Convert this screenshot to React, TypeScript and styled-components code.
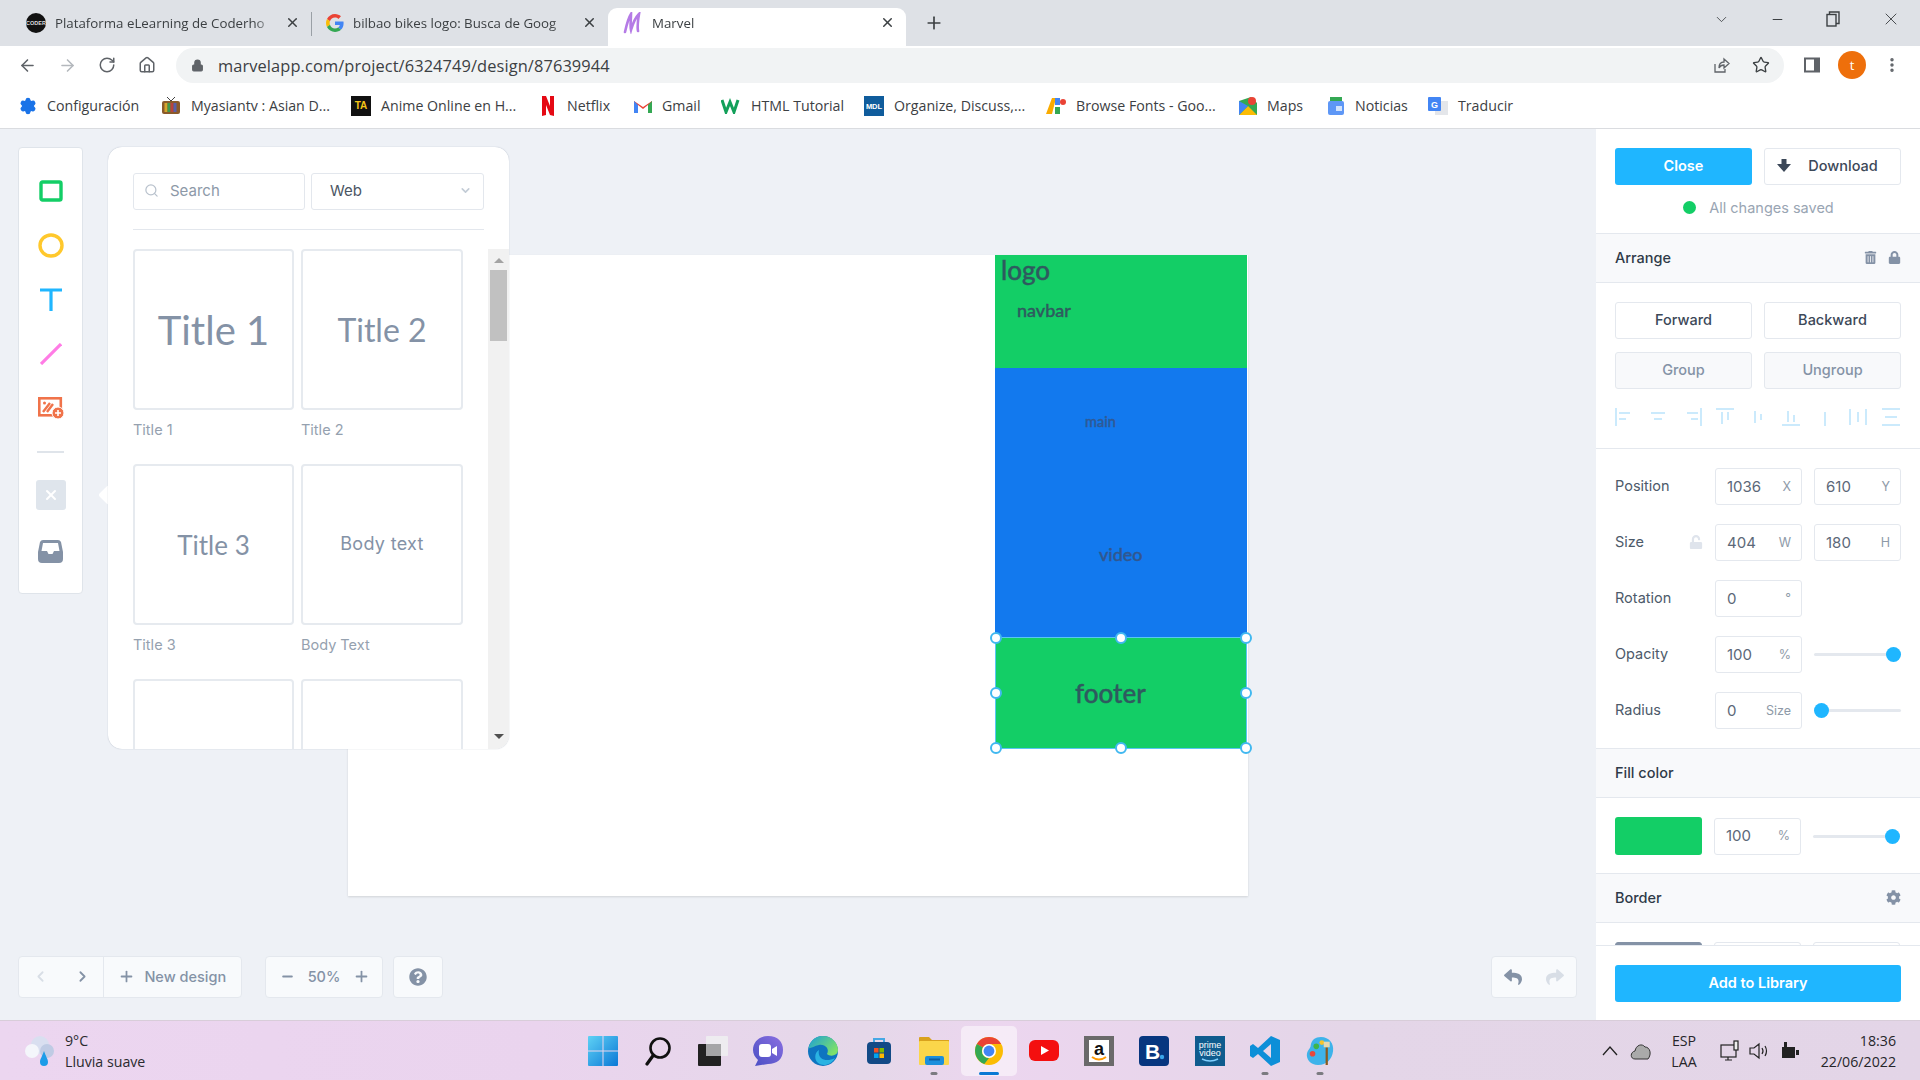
import React from 'react'
import styled, { createGlobalStyle } from 'styled-components'
import {
  ArrowLeft, ArrowRight, RotateCw, Home, Lock, Star, MoreVertical, Plus, X, ChevronDown,
  Minus, Search, ChevronLeft, ChevronRight, Settings,
} from 'lucide-react'
import { FaTrashAlt, FaLock, FaUnlock, FaQuestionCircle, FaReply, FaShare, FaCog } from 'react-icons/fa'

const GlobalStyle = createGlobalStyle`
  html, body { margin: 0; padding: 0; width: 1920px; height: 1080px; overflow: hidden; }
  * { box-sizing: border-box; }
  body { font-family: "Open Sans", "Liberation Sans", sans-serif; background: #eef1f6; }
`

const Page = styled.div`
  width: 1920px;
  height: 1080px;
  display: flex;
  flex-direction: column;
`

/* browser chrome */
const TabStrip = styled.div`
  height: 46px;
  background: #dee1e6;
  display: flex;
  align-items: flex-end;
  padding-left: 14px;
  position: relative;
`
const Tab = styled.div<{ $active?: boolean; $w: number; $pl?: number }>`
  width: ${p => p.$w}px;
  height: 38px;
  padding: 0 11px 9px ${p => p.$pl ?? 12}px;
  display: flex;
  align-items: center;
  gap: 9px;
  font-size: 13.3px;
  color: #3c4043;
  background: ${p => (p.$active ? '#fff' : 'transparent')};
  border-radius: 9px 9px 0 0;
`
const TabTitle = styled.span`
  flex: 1;
  white-space: nowrap;
  -webkit-mask-image: linear-gradient(90deg, #000 90%, transparent);
  mask-image: linear-gradient(90deg, #000 90%, transparent);
`
const TabSep = styled.div`
  width: 1px;
  height: 24px;
  background: #9aa0a6;
  margin-bottom: 10px;
`
const NewTab = styled.div`
  width: 30px;
  height: 38px;
  margin-left: 13px;
  display: flex;
  align-items: center;
  justify-content: center;
  padding-bottom: 8px;
  color: #3c4043;
`
const WindowControls = styled.div`
  margin-left: auto;
  height: 46px;
  display: flex;
  align-items: center;
  color: #3c4043;
`
const WinBtn = styled.div<{ $w: number }>`
  width: ${p => p.$w}px;
  display: flex;
  justify-content: center;
  padding-bottom: 8px;
`
const Toolbar = styled.div`
  height: 38px;
  background: #fff;
  display: flex;
  align-items: center;
  padding: 0 0 0 15px;
  color: #5f6368;
`
const NavIcon = styled.div<{ $off?: boolean; $w?: number }>`
  width: ${p => p.$w ?? 40}px;
  display: flex;
  justify-content: flex-start;
  padding-left: 3px;
  color: ${p => (p.$off ? '#b4b8bd' : '#5f6368')};
`
const Omnibox = styled.div`
  width: 1608px;
  flex: none;
  margin-left: 19px;
  height: 35px;
  background: #f1f3f4;
  border-radius: 18px;
  display: flex;
  align-items: center;
  padding: 0 14px 0 15px;
  gap: 14px;
  font-size: 16.4px;
  color: #202124;
`
const UrlText = styled.span`
  flex: 1;
  color: #3c4043;
  letter-spacing: 0.1px;
`
const ProfileRow = styled.div`
  display: flex;
  align-items: center;
  margin-left: 19px;
  gap: 17px;
`
const Avatar = styled.div`
  width: 28px;
  height: 28px;
  border-radius: 50%;
  background: #ee6f0b;
  color: #fff;
  font-size: 13px;
  display: flex;
  align-items: center;
  justify-content: center;
`
const Bookmarks = styled.div`
  height: 45px;
  background: #fff;
  border-bottom: 1px solid #dadce0;
  display: flex;
  align-items: center;
  padding: 0 0 1px 19px;
  font-size: 14.2px;
  color: #3c4043;
`
const Bookmark = styled.div<{ $w: number }>`
  width: ${p => p.$w}px;
  flex: none;
  display: flex;
  align-items: center;
  gap: 10px;
  white-space: nowrap;
`

/* marvel workspace */
const Workspace = styled.div`
  flex: 1;
  position: relative;
  display: flex;
  background: #eef1f6;
  min-height: 0;
`
const Stage = styled.div`
  flex: 1;
  position: relative;
  overflow: hidden;
`
const Artboard = styled.div`
  position: absolute;
  left: 348px;
  top: 126px;
  width: 900px;
  height: 641px;
  background: #fff;
  box-shadow: 0 1px 2px rgba(0, 0, 0, 0.12);
`
const Shape = styled.div<{ $x: number; $y: number; $w: number; $h: number; $c: string }>`
  position: absolute;
  left: ${p => p.$x}px;
  top: ${p => p.$y}px;
  width: ${p => p.$w}px;
  height: ${p => p.$h}px;
  background: ${p => p.$c};
`
const ShapeText = styled.span<{ $x: number; $y: number; $s: number; $c?: string }>`
  position: absolute;
  left: ${p => p.$x}px;
  top: ${p => p.$y}px;
  font-family: Lato, "Open Sans", sans-serif;
  font-size: ${p => p.$s}px;
  line-height: 1;
  font-weight: 500;
  color: ${p => p.$c ?? '#2f5a5f'};
  -webkit-text-stroke: 0.4px currentColor;
`
const Selection = styled.div`
  position: absolute;
  left: 995px;
  top: 508px;
  width: 252px;
  height: 112px;
  border: 1px solid #58c6f2;
`
const Handle = styled.span<{ $l: string; $t: string }>`
  position: absolute;
  left: ${p => p.$l};
  top: ${p => p.$t};
  width: 12px;
  height: 12px;
  margin: -6px 0 0 -6px;
  background: #fff;
  border: 2px solid #41b8f0;
  border-radius: 50%;
`
const ToolRail = styled.div`
  position: absolute;
  left: 18px;
  top: 18px;
  width: 65px;
  height: 447px;
  background: #fff;
  border: 1px solid #dfe4ea;
  border-radius: 4px;
  display: flex;
  flex-direction: column;
  align-items: center;
  padding-top: 29px;
`
const ToolSlot = styled.div<{ $h: number }>`
  height: ${p => p.$h}px;
  flex: none;
  display: flex;
  align-items: center;
  justify-content: center;
`
const RailLine = styled.div`
  width: 27px;
  height: 2px;
  background: #dfe4ea;
`
const CloseTool = styled.div`
  width: 30px;
  height: 30px;
  border-radius: 3px;
  background: #dfe5ec;
  color: #fff;
  display: flex;
  align-items: center;
  justify-content: center;
`
const Library = styled.div`
  position: absolute;
  left: 108px;
  top: 18px;
  width: 401px;
  height: 602px;
  background: #fff;
  border-radius: 14px;
  box-shadow: 0 0 1px rgba(80, 100, 130, 0.5);
  padding: 26px 25px 0;
  overflow: hidden;
`
const Caret = styled.div`
  position: absolute;
  left: 101px;
  top: 359px;
  width: 14px;
  height: 14px;
  background: #fff;
  transform: rotate(45deg);
  border-radius: 2px;
`
const FilterRow = styled.div`
  display: flex;
  gap: 6px;
  width: 351px;
`
const SearchBox = styled.div`
  width: 172px;
  height: 37px;
  border: 1px solid #e3e7ed;
  border-radius: 3px;
  display: flex;
  align-items: center;
  gap: 11px;
  padding: 0 0 2px 10px;
  font: 15px Inter, sans-serif;
  color: #8d99a8;
`
const SelectBox = styled.div`
  width: 173px;
  height: 37px;
  border: 1px solid #e3e7ed;
  border-radius: 3px;
  display: flex;
  align-items: center;
  justify-content: space-between;
  padding: 0 11px 2px 18px;
  font: 15px Inter, sans-serif;
  color: #4b5563;
`
const LibRule = styled.div`
  width: 351px;
  height: 1px;
  background: #e3e7ed;
  margin: 19px 0 19px;
`
const CardGrid = styled.div`
  display: grid;
  grid-template-columns: 161px 162px;
  column-gap: 7px;
  grid-auto-rows: 215px;
`
const CardItem = styled.div`
  display: flex;
  flex-direction: column;
`
const CardFace = styled.div<{ $size?: number; $body?: boolean }>`
  height: 161px;
  flex: none;
  border: 2px solid #e6eaef;
  border-radius: 4px;
  display: flex;
  align-items: center;
  justify-content: center;
  font-family: ${p => (p.$body ? 'Inter' : 'Lato')}, sans-serif;
  font-size: ${p => p.$size ?? 16}px;
  ${p => p.$body && 'letter-spacing: 0.3px; padding-bottom: 3px;'}
  color: #8492a6;
`
const CardLabel = styled.div`
  margin-top: 11px;
  font: 14.5px Inter, sans-serif;
  color: #95a1af;
`
const ScrollTrack = styled.div`
  position: absolute;
  right: 0;
  top: 102px;
  bottom: 0;
  width: 21px;
  background: #f1f1f1;
  display: flex;
  flex-direction: column;
  align-items: center;
`
const ScrollArrow = styled.div<{ $down?: boolean }>`
  width: 0;
  height: 0;
  border-left: 5px solid transparent;
  border-right: 5px solid transparent;
  ${p => (p.$down ? 'border-top: 5px solid #505050;' : 'border-bottom: 5px solid #a3a3a3;')}
  margin-top: ${p => (p.$down ? 'auto' : '9px')};
  margin-bottom: ${p => (p.$down ? '10px' : '0')};
`
const ScrollThumb = styled.div`
  width: 17px;
  height: 71px;
  background: #c1c1c1;
  margin-top: 7px;
`
const FloatGroup = styled.div<{ $x: number; $w: number }>`
  position: absolute;
  left: ${p => p.$x}px;
  top: 827px;
  width: ${p => p.$w}px;
  height: 42px;
  background: #f8fafc;
  border: 1px solid #e4e8ee;
  border-radius: 4px;
  display: flex;
  align-items: center;
  color: #8492a6;
  font: 500 14.5px Inter, sans-serif;
`
const NavCell = styled.div<{ $w: number; $line?: boolean; $off?: boolean }>`
  width: ${p => p.$w}px;
  height: 100%;
  display: flex;
  align-items: center;
  justify-content: center;
  gap: 9px;
  padding-bottom: 1px;
  ${p => p.$line && 'border-right: 1px solid #e4e8ee;'}
  color: ${p => (p.$off ? '#d8dee6' : '#8492a6')};
`

/* right inspector */
const Inspector = styled.aside`
  width: 324px;
  flex: none;
  background: #fff;
  display: flex;
  flex-direction: column;
  font-family: Inter, sans-serif;
`
const InspectorScroll = styled.div`
  flex: 1;
  min-height: 0;
  overflow: hidden;
`
const ActionRow = styled.div<{ $mt?: number }>`
  display: flex;
  gap: 12px;
  padding: 0 19px;
  margin-top: ${p => p.$mt ?? 0}px;
`
const Btn = styled.div<{ $kind?: 'primary' | 'ghost' | 'muted' }>`
  width: 137px;
  height: 37px;
  flex: none;
  border-radius: 3px;
  display: flex;
  align-items: center;
  justify-content: center;
  padding-bottom: 2px;
  font-size: 14.5px;
  font-weight: 500;
  ${p =>
    p.$kind === 'primary'
      ? 'background: #1fb6ff; color: #fff; font-weight: 600;'
      : p.$kind === 'muted'
        ? 'background: #f8f9fb; color: #8492a6; border: 1px solid #e4e8ee;'
        : 'background: #fff; color: #3c4858; border: 1px solid #e4e8ee;'}
`
const DownloadBtn = styled(Btn)`
  gap: 17px;
  padding-right: 10px;
`
const SavedRow = styled.div`
  height: 48px;
  display: flex;
  align-items: center;
  justify-content: center;
  gap: 13px;
  padding: 0 0 4px 1px;
  font-size: 14.5px;
  color: #99a5b3;
`
const GreenDot = styled.span`
  width: 13px;
  height: 13px;
  border-radius: 50%;
  background: #13ce66;
`
const SectionHead = styled.div`
  height: 50px;
  background: #f8f9fb;
  border-top: 1px solid #e4e8ee;
  border-bottom: 1px solid #e4e8ee;
  display: flex;
  align-items: center;
  padding: 0 19px 2px;
  font-size: 14.5px;
  font-weight: 500;
  color: #2f3a48;
`
const HeadIcons = styled.div`
  margin-left: auto;
  display: flex;
  gap: 11px;
  color: #8492a6;
  align-items: center;
`
const AlignRow = styled.div`
  display: flex;
  justify-content: space-between;
  align-items: flex-start;
  padding: 19px 19px 0 19px;
  height: 60px;
  border-bottom: 1px solid #e4e8ee;
`
const AlignGlyph = styled.svg`
  width: 20px;
  height: 18px;
  flex: none;
`
const PropRows = styled.div`
  padding: 19px;
  display: flex;
  flex-direction: column;
  gap: 19px;
`
const PropRow = styled.div`
  height: 37px;
  display: grid;
  grid-template-columns: 88px 87px 87px;
  column-gap: 12px;
  align-items: center;
  font-size: 14.5px;
  color: #4d5a6a;
`
const PropLabel = styled.div`
  display: flex;
  align-items: center;
  justify-content: space-between;
  padding-bottom: 2px;
`
const Field = styled.div`
  height: 37px;
  border: 1px solid #e4e8ee;
  border-radius: 3px;
  display: flex;
  align-items: center;
  justify-content: space-between;
  padding: 0 10px 1px 11px;
  font-size: 15px;
  color: #5c6878;
`
const FieldUnit = styled.span`
  font-size: 12.5px;
  color: #8e9aa8;
`
const Slider = styled.div`
  height: 3px;
  background: #e4e8ee;
  position: relative;
  border-radius: 2px;
`
const Thumb = styled.span<{ $end?: boolean }>`
  position: absolute;
  top: -6px;
  ${p => (p.$end ? 'right: 0;' : 'left: 0;')}
  width: 15px;
  height: 15px;
  border-radius: 50%;
  background: #1fb6ff;
`
const FillRow = styled(PropRow)`
  grid-template-columns: 87px 87px 87px;
  margin: 19px 19px 18px;
  height: 38px;
`
const Swatch = styled.div`
  height: 38px;
  border-radius: 3px;
  background: #13ce66;
`
const ClippedFields = styled.div`
  display: grid;
  grid-template-columns: 87px 87px 87px;
  column-gap: 12px;
  margin: 19px 19px 0;
`
const ClippedField = styled.div<{ $dark?: boolean }>`
  height: 40px;
  border: 1px solid ${p => (p.$dark ? '#8492a6' : '#e4e8ee')};
  background: ${p => (p.$dark ? '#8492a6' : '#fff')};
  border-radius: 3px;
`
const InspectorFoot = styled.div`
  height: 75px;
  flex: none;
  border-top: 1px solid #e4e8ee;
  padding: 19px 19px 0;
`
const LibraryBtn = styled(Btn)`
  width: 286px;
`

/* windows taskbar */
const Taskbar = styled.div`
  height: 60px;
  flex: none;
  background: linear-gradient(90deg, #ecd6f0 0%, #ead4ee 28%, #e5d8e9 45%, #ecd6ef 52%, #e4d6e8 70%, #e3d5e7 100%);
  border-top: 1px solid #d8cdd9;
  position: relative;
  display: flex;
  align-items: center;
`
const Weather = styled.div`
  width: 575px;
  flex: none;
  display: flex;
  align-items: center;
  gap: 9px;
  padding-left: 24px;
  font-size: 14.2px;
  line-height: 21px;
  color: #2a2a2e;
`
const DockRow = styled.div`
  display: flex;
  align-items: center;
`
const DockCell = styled.div<{ $active?: boolean }>`
  width: 55.2px;
  height: 50px;
  display: flex;
  align-items: center;
  justify-content: center;
  position: relative;
  border-radius: 5px;
  ${p => p.$active && 'background: rgba(255,255,255,0.5);'}
`
const DockMark = styled.span<{ $active?: boolean }>`
  position: absolute;
  bottom: 1px;
  left: 50%;
  transform: translateX(-50%);
  height: 3px;
  border-radius: 2px;
  width: ${p => (p.$active ? 20 : 7)}px;
  background: ${p => (p.$active ? '#0a78d4' : '#7b7b80')};
`
const Tray = styled.div`
  margin-left: auto;
  display: flex;
  align-items: center;
  padding-right: 24px;
  color: #26262a;
  font-size: 14.2px;
  line-height: 21px;
`
const TrayText = styled.div<{ $right?: boolean; $w: number }>`
  width: ${p => p.$w}px;
  text-align: ${p => (p.$right ? 'right' : 'center')};
`
const TrayIcons = styled.div`
  display: flex;
  align-items: center;
  gap: 9px;
  margin: 0 16px 0 22px;
`
const TrayGlyph = styled.svg<{ $mr: number }>`
  margin-right: ${p => p.$mr}px;
  flex: none;
`

const DockIcons: { key: string; node: React.ReactNode; dot?: boolean; active?: boolean }[] = [
  {
    key: 'win',
    node: (
      <svg width="30" height="30" viewBox="0 0 30 30">
        <defs>
          <linearGradient id="winG" x1="0" y1="0" x2="1" y2="1">
            <stop offset="0" stopColor="#5fd2f5" />
            <stop offset="1" stopColor="#0b78d6" />
          </linearGradient>
        </defs>
        <path d="M0 1 Q0 0 1 0 H14.5 V14.5 H0Z M15.5 0 H29 Q30 0 30 1 V14.5 H15.5Z M0 15.5 H14.5 V30 H1 Q0 30 0 29Z M15.5 15.5 H30 V29 Q30 30 29 30 H15.5Z" fill="url(#winG)" />
      </svg>
    ),
  },
  {
    key: 'search',
    node: (
      <svg width="28" height="30" viewBox="0 0 28 30" fill="none">
        <circle cx="16" cy="12" r="9.5" stroke="#111" strokeWidth="2.6" />
        <path d="M9.5 19 L3 28" stroke="#111" strokeWidth="3.2" strokeLinecap="round" />
      </svg>
    ),
  },
  {
    key: 'tasks',
    node: (
      <svg width="30" height="30" viewBox="0 0 30 30">
        <rect x="8" y="0" width="22" height="20" rx="1" fill="#eeecf0" />
        <rect x="0" y="8" width="23" height="22" rx="1" fill="#222" />
        <rect x="8" y="8" width="15" height="12" fill="#a5a5a7" />
      </svg>
    ),
  },
  {
    key: 'chat',
    node: (
      <svg width="30" height="30" viewBox="0 0 30 30">
        <defs>
          <linearGradient id="chatG" x1="0" y1="1" x2="1" y2="0">
            <stop offset="0" stopColor="#4a4fc4" />
            <stop offset="1" stopColor="#8a6fe0" />
          </linearGradient>
        </defs>
        <path d="M15 0 C25 0 30 6 30 14 C30 23 24 28 15 28 L2 30 L5 24 C2 21 0 18 0 14 C0 6 6 0 15 0Z" fill="url(#chatG)" />
        <rect x="6" y="8" width="12" height="13" rx="3" fill="#fff" />
        <path d="M19 13 L24 10 V20 L19 17Z" fill="#fff" />
      </svg>
    ),
  },
  {
    key: 'edge',
    node: (
      <svg width="30" height="30" viewBox="0 0 30 30">
        <defs>
          <linearGradient id="edgeG" x1="0" y1="0" x2="1" y2="0.6">
            <stop offset="0" stopColor="#1a9fd8" />
            <stop offset="1" stopColor="#7de06a" />
          </linearGradient>
        </defs>
        <circle cx="15" cy="15" r="15" fill="#0e74c0" />
        <path d="M0.5 12 C3 2 10 0 15 0 C24 0 30 7 30 14 C30 20 22 21 19 18 C22 13 17 8 11 9 C6 10 2 13 0.5 12Z" fill="url(#edgeG)" />
        <path d="M11 14 C9 22 17 27 27 22 C23 30 13 31 9 26 C6 22 7 16 11 14Z" fill="#2ab3e2" />
      </svg>
    ),
  },
  {
    key: 'store',
    node: (
      <svg width="24" height="28" viewBox="0 0 24 28">
        <path d="M7 6 V2 H17 V6" fill="none" stroke="#46a8e4" strokeWidth="2" />
        <rect x="0" y="5" width="24" height="22" rx="4" fill="#124a86" />
        <rect x="7" y="11" width="4.5" height="4.5" fill="#f25022" />
        <rect x="12.5" y="11" width="4.5" height="4.5" fill="#7fba00" />
        <rect x="7" y="16.5" width="4.5" height="4.5" fill="#00a4ef" />
        <rect x="12.5" y="16.5" width="4.5" height="4.5" fill="#ffb900" />
      </svg>
    ),
  },
  {
    key: 'files',
    dot: true,
    node: (
      <svg width="30" height="28" viewBox="0 0 30 28">
        <path d="M0 1 Q0 0 1 0 H10 L13 3 H30 V10 H0Z" fill="#d9a21d" />
        <rect x="0" y="4" width="30" height="24" rx="1" fill="#fbd64a" />
        <rect x="6" y="19" width="19" height="9" rx="2" fill="#1c8fdc" />
        <rect x="10" y="21.5" width="11" height="2" fill="#0e5ea0" />
      </svg>
    ),
  },
  {
    key: 'chrome',
    active: true,
    node: (
      <svg width="28" height="28" viewBox="0 0 30 30">
        <circle cx="15" cy="15" r="15" fill="#fbbc04" />
        <path d="M15 0 A15 15 0 0 1 28 7.5 H15 A7.5 7.5 0 0 0 8.5 11.2 L2 7.5 A15 15 0 0 1 15 0Z" fill="#ea4335" />
        <path d="M2 7.5 L8.5 11.2 A7.5 7.5 0 0 0 15 22.5 L10 29 A15 15 0 0 1 2 7.5Z" fill="#34a853" />
        <circle cx="15" cy="15" r="7.5" fill="#fff" />
        <circle cx="15" cy="15" r="5.8" fill="#4285f4" />
      </svg>
    ),
  },
  {
    key: 'youtube',
    node: (
      <svg width="30" height="30" viewBox="0 0 30 30">
        <rect x="0" y="4" width="30" height="21" rx="6" fill="#f40f0f" />
        <path d="M12 10 L20 14.5 L12 19Z" fill="#fff" />
      </svg>
    ),
  },
  {
    key: 'amazon',
    node: (
      <svg width="30" height="30" viewBox="0 0 30 30">
        <rect width="30" height="30" fill="#6a6a6a" />
        <rect x="5" y="4" width="20" height="22" fill="#fff" />
        <text x="15" y="19" textAnchor="middle" fontSize="18" fontWeight="700" fontFamily="Liberation Sans" fill="#111">a</text>
        <path d="M8 21 Q15 26 22 21" fill="none" stroke="#f90" strokeWidth="2" />
      </svg>
    ),
  },
  {
    key: 'booking',
    node: (
      <svg width="30" height="30" viewBox="0 0 30 30">
        <rect width="30" height="30" rx="4" fill="#07367f" />
        <text x="6" y="23" fontSize="21" fontWeight="700" fontFamily="Liberation Sans" fill="#fff">B</text>
        <circle cx="23" cy="21" r="2.2" fill="#3aa6ea" />
      </svg>
    ),
  },
  {
    key: 'prime',
    node: (
      <svg width="30" height="30" viewBox="0 0 30 30">
        <rect width="30" height="30" fill="#0f5c8e" />
        <text x="15" y="12" textAnchor="middle" fontSize="9" fontFamily="Liberation Sans" fill="#fff">prime</text>
        <text x="15" y="20" textAnchor="middle" fontSize="9" fontFamily="Liberation Sans" fill="#fff">video</text>
        <path d="M7 23 Q15 27 23 23" fill="none" stroke="#7fd0ff" strokeWidth="1.4" />
      </svg>
    ),
  },
  {
    key: 'vscode',
    dot: true,
    node: (
      <svg width="30" height="30" viewBox="0 0 30 30">
        <path d="M21 0 L30 4 V26 L21 30 L8 18 L3 22 L0 20 V10 L3 8 L8 12Z M21 8 L13 15 L21 22Z" fill="#0d8fd8" fillRule="evenodd" />
      </svg>
    ),
  },
  {
    key: 'paint',
    dot: true,
    node: (
      <svg width="28" height="30" viewBox="0 0 30 30">
        <path d="M16 0 C25 0 30 7 29 15 C28 24 22 30 13 30 C5 30 0 24 1 18 C2 13 5 12 5 9 C6 3 10 0 16 0Z" fill="#3eb3ea" />
        <circle cx="7" cy="18" r="3" fill="#e8483a" />
        <circle cx="11" cy="10" r="3" fill="#3fb54a" />
        <circle cx="17" cy="6" r="2.6" fill="#f3c42c" />
        <rect x="21" y="11" width="2.4" height="19" fill="#8a5a1e" />
        <rect x="19" y="5" width="6.4" height="6" fill="#e4d8b0" />
      </svg>
    ),
  },
]

const AlignIcon = ({ d }: { d: string }) => (
  <AlignGlyph viewBox="0 0 20 18" fill="none" stroke="#cbeafc" strokeWidth="2">
    <path d={d} />
  </AlignGlyph>
)

const Favicon = ({ c, t, fg = '#fff', size = 7 }: { c: string; t: string; fg?: string; size?: number }) => (
  <svg width="20" height="20" viewBox="0 0 20 20">
    <rect width="20" height="20" fill={c} />
    <text x="10" y="13" textAnchor="middle" fontSize={size} fontWeight="700" fontFamily="Liberation Sans" fill={fg}>{t}</text>
  </svg>
)

const GoogleG = () => (
  <svg width="18" height="18" viewBox="0 0 48 48">
    <path fill="#EA4335" d="M24 9.5c3.5 0 6.7 1.3 9.1 3.5l6.8-6.8C35.8 2.4 30.2 0 24 0 14.6 0 6.5 5.4 2.6 13.2l7.9 6.2C12.4 13.6 17.7 9.5 24 9.5z" />
    <path fill="#4285F4" d="M46.9 24.5c0-1.6-.1-3.1-.4-4.5H24v9h12.9c-.6 3-2.2 5.5-4.7 7.2l7.7 6c4.5-4.2 7-10.3 7-17.7z" />
    <path fill="#FBBC05" d="M10.5 28.6c-.5-1.4-.8-3-.8-4.6s.3-3.2.8-4.6l-7.9-6.2C.9 16.5 0 20.1 0 24s.9 7.5 2.6 10.8l7.9-6.2z" />
    <path fill="#34A853" d="M24 48c6.5 0 11.9-2.1 15.9-5.8l-7.7-6c-2.2 1.4-4.9 2.3-8.2 2.3-6.3 0-11.6-4.2-13.5-9.9l-7.9 6.2C6.5 42.6 14.6 48 24 48z" />
  </svg>
)

const MarvelMark = () => (
  <svg width="20" height="22" viewBox="0 0 20 22" fill="none" stroke="#b57be6" strokeWidth="2.6" strokeLinecap="round">
    <path d="M2 20 C4 11 6 5 8 2 C8 8 7 14 8 18 C10 11 13 5 16 2 C15 8 14 14 15 19" />
  </svg>
)

const handles: [string, string][] = [
  ['0', '0'], ['50%', '0'], ['100%', '0'], ['0', '50%'], ['100%', '50%'], ['0', '100%'], ['50%', '100%'], ['100%', '100%'],
]

export default function App() {
  return (
    <Page>
      <GlobalStyle />
      <TabStrip>
        <Tab $w={297}>
          <svg width="20" height="20" viewBox="0 0 20 20">
            <circle cx="10" cy="10" r="10" fill="#111" />
            <text x="10" y="12" textAnchor="middle" fontSize="5.5" fontWeight="700" fontFamily="Liberation Sans" fill="#ddd">CODER</text>
          </svg>
          <TabTitle>Plataforma eLearning de Coderho</TabTitle>
          <X size={15} strokeWidth={2.4} />
        </Tab>
        <TabSep />
        <Tab $w={296} $pl={14}>
          <GoogleG />
          <TabTitle>bilbao bikes logo: Busca de Goog</TabTitle>
          <X size={15} strokeWidth={2.4} />
        </Tab>
        <Tab $active $w={298} $pl={15}>
          <MarvelMark />
          <TabTitle>Marvel</TabTitle>
          <X size={15} strokeWidth={2.4} />
        </Tab>
        <NewTab><Plus size={20} strokeWidth={2} /></NewTab>
        <WindowControls>
          <WinBtn $w={58}><ChevronDown size={17} strokeWidth={1.2} /></WinBtn>
          <WinBtn $w={54}><Minus size={15} strokeWidth={1.6} /></WinBtn>
          <WinBtn $w={58}>
            <svg width="14" height="16" viewBox="0 0 14 16" fill="none" stroke="#3c4043" strokeWidth="1.4"><rect x="1" y="3.5" width="9" height="11.5" /><path d="M3.5 3.5 V1 H13 V12.5 H10" /></svg>
          </WinBtn>
          <WinBtn $w={58}><X size={20} strokeWidth={1.1} /></WinBtn>
        </WindowControls>
      </TabStrip>

      <Toolbar>
        <NavIcon><ArrowLeft size={19} /></NavIcon>
        <NavIcon $off><ArrowRight size={19} /></NavIcon>
        <NavIcon><RotateCw size={18} /></NavIcon>
        <NavIcon $w={22}><Home size={18} /></NavIcon>
        <Omnibox>
          <Lock size={13} fill="#5f6368" color="#5f6368" />
          <UrlText>marvelapp.com/project/6324749/design/87639944</UrlText>
          <svg width="18" height="18" viewBox="0 0 18 18" fill="none" stroke="#5f6368" strokeWidth="1.3">
            <path d="M3 8 V16 H13 V13" />
            <path d="M7 12 C7 8 9 6 12 6 V3 L17 7.5 L12 12 V9 C10 9 8 10 7 12Z" />
          </svg>
          <Star size={18} color="#3c4043" strokeWidth={1.8} style={{ marginLeft: 8 }} />
        </Omnibox>
        <ProfileRow>
          <svg width="18" height="18" viewBox="0 0 18 18"><rect x="1" y="1.5" width="16" height="15" fill="#5f6368" /><rect x="3" y="3.5" width="8" height="11" fill="#fff" /></svg>
          <Avatar>t</Avatar>
          <MoreVertical size={18} color="#5f6368" strokeWidth={2.6} />
        </ProfileRow>
      </Toolbar>

      <Bookmarks>
        <Bookmark $w={142}><Settings size={18} fill="#1a73e8" color="#1a73e8" />Configuración</Bookmark>
        <Bookmark $w={190}>
          <svg width="20" height="20" viewBox="0 0 20 20">
            <path d="M6 1 L10 5 L14 1" stroke="#444" fill="none" />
            <rect x="1" y="5" width="18" height="13" rx="2" fill="#8a5a2a" />
            <rect x="3.5" y="7" width="3" height="9" fill="#d6a52c" />
            <rect x="6.5" y="7" width="3" height="9" fill="#3f9a4d" />
            <rect x="9.5" y="7" width="3" height="9" fill="#b8433d" />
            <rect x="12.5" y="7" width="3" height="9" fill="#5a5fa8" />
          </svg>
          Myasiantv : Asian D...
        </Bookmark>
        <Bookmark $w={188}><Favicon c="#111" t="TA" fg="#f5c518" size={10} />Anime Online en H...</Bookmark>
        <Bookmark $w={95}>
          <svg width="18" height="20" viewBox="0 0 18 20"><path d="M3 0 H7 L11 10 V0 H15 V20 L11 19 L7 9 V19 L3 20Z" fill="#e50914" /></svg>
          Netflix
        </Bookmark>
        <Bookmark $w={87}>
          <svg width="18" height="14" viewBox="0 0 18 14"><path d="M0 2 L9 8 L18 2 V14 H14 V6 L9 10 L4 6 V14 H0Z" fill="#ea4335" /><path d="M0 2 V14 H4 V6Z" fill="#4285f4" /><path d="M18 2 V14 H14 V6Z" fill="#34a853" /></svg>
          Gmail
        </Bookmark>
        <Bookmark $w={143}>
          <svg width="20" height="16" viewBox="0 0 20 16" fill="none" stroke="#13a05a" strokeWidth="3"><path d="M1 2 L5 14 L9 4 L13 14 L17 2" /></svg>
          HTML Tutorial
        </Bookmark>
        <Bookmark $w={182}><Favicon c="#0f5c9c" t="MDL" size={7.5} />Organize, Discuss,...</Bookmark>
        <Bookmark $w={193}>
          <svg width="20" height="16" viewBox="0 0 20 16"><path d="M0 16 L6 0 H10 L6 16Z" fill="#f9ab00" /><rect x="9" y="0" width="5" height="7" fill="#4285f4" /><rect x="9" y="9" width="5" height="7" fill="#34a853" /><circle cx="17" cy="4" r="3" fill="#ea4335" /></svg>
          Browse Fonts - Goo...
        </Bookmark>
        <Bookmark $w={88}>
          <svg width="18" height="18" viewBox="0 0 18 18"><path d="M0 4 L12 0 L18 6 V18 H0Z" fill="#34a853" /><path d="M0 18 L9 9 L18 18Z" fill="#fbbc04" /><path d="M0 4 L9 9 L0 18Z" fill="#4285f4" /><circle cx="13" cy="4" r="4" fill="#ea4335" /></svg>
          Maps
        </Bookmark>
        <Bookmark $w={101}>
          <svg width="18" height="18" viewBox="0 0 18 18"><rect x="3" y="0" width="12" height="6" fill="#34a853" /><rect x="1" y="4" width="16" height="14" rx="2" fill="#5e97f6" /><rect x="9" y="9" width="6" height="5" fill="#d2e3fc" /></svg>
          Noticias
        </Bookmark>
        <Bookmark $w={100}>
          <svg width="20" height="20" viewBox="0 0 20 20"><rect x="7" y="5" width="13" height="14" fill="#e4e6ea" /><rect x="0" y="1" width="13" height="14" rx="1" fill="#4285f4" /><text x="6.5" y="11.5" textAnchor="middle" fontSize="9" fontWeight="700" fontFamily="Liberation Sans" fill="#fff">G</text></svg>
          Traducir
        </Bookmark>
      </Bookmarks>

      <Workspace>
        <Stage>
          <Artboard />
          <Shape $x={995} $y={126} $w={252} $h={113} $c="#13ce66">
            <ShapeText $x={6} $y={2} $s={26}>logo</ShapeText>
            <ShapeText $x={22} $y={46} $s={18}>navbar</ShapeText>
          </Shape>
          <Shape $x={995} $y={239} $w={252} $h={269} $c="#1279ee">
            <ShapeText $x={90} $y={47} $s={14.5} $c="#2f5a96">main</ShapeText>
            <ShapeText $x={104} $y={177} $s={18} $c="#31578f">video</ShapeText>
          </Shape>
          <Shape $x={995} $y={508} $w={252} $h={112} $c="#13ce66">
            <ShapeText $x={80} $y={43} $s={26}>footer</ShapeText>
          </Shape>
          <Selection>
            {handles.map(([l, t]) => <Handle key={l + t} $l={l} $t={t} />)}
          </Selection>

          <ToolRail>
            <ToolSlot $h={27}><svg width="24" height="22" viewBox="0 0 24 22" fill="none"><rect x="2" y="2" width="20" height="18" rx="1.5" stroke="#13ce66" strokeWidth="3.4" /></svg></ToolSlot>
            <ToolSlot $h={82}><svg width="26" height="25" viewBox="0 0 26 25" fill="none"><ellipse cx="13" cy="12.5" rx="11" ry="10.5" stroke="#ffc82c" strokeWidth="3.4" /></svg></ToolSlot>
            <ToolSlot $h={28}><svg width="22" height="24" viewBox="0 0 22 24" fill="none" stroke="#1fb6ff" strokeWidth="3.2"><path d="M0 2 H22 M11 2 V23" /></svg></ToolSlot>
            <ToolSlot $h={80}><svg width="22" height="22" viewBox="0 0 22 22" fill="none"><path d="M1 21 L21 1" stroke="#ff7ce5" strokeWidth="3.2" /></svg></ToolSlot>
            <ToolSlot $h={28}>
              <svg width="26" height="22" viewBox="0 0 26 22" fill="none">
                <rect x="1.3" y="1.3" width="21.5" height="17" stroke="#f0734a" strokeWidth="2.6" />
                <path d="M5 15 L12 6 M9 15 L15 7" stroke="#f0734a" strokeWidth="2.4" />
                <circle cx="6.5" cy="6" r="1.5" fill="#f0734a" />
                <circle cx="20" cy="16" r="6" fill="#f0734a" stroke="#fff" strokeWidth="1" />
                <path d="M17 16 H23 M20 13 V19" stroke="#fff" strokeWidth="1.6" />
              </svg>
            </ToolSlot>
            <ToolSlot $h={60}><RailLine /></ToolSlot>
            <ToolSlot $h={26}><CloseTool><X size={16} strokeWidth={3} /></CloseTool></ToolSlot>
            <ToolSlot $h={86}>
              <svg width="25" height="24" viewBox="0 0 25 24">
                <path fill="#8492a6" fillRule="evenodd" d="M5 1 H20 Q22 1 23 3 L25 13 V20 Q25 24 21 24 H4 Q0 24 0 20 V13 L2 3 Q3 1 5 1Z M5 4 L3.5 12 H9 L10.5 15 H14.5 L16 12 H21.5 L20 4Z" />
              </svg>
            </ToolSlot>
          </ToolRail>

          <Caret />
          <Library>
            <FilterRow>
              <SearchBox><Search size={15} color="#b9c2cd" />Search</SearchBox>
              <SelectBox>Web<ChevronDown size={13} color="#c3ccd6" strokeWidth={3} /></SelectBox>
            </FilterRow>
            <LibRule />
            <CardGrid>
              <CardItem><CardFace $size={40}>Title 1</CardFace><CardLabel>Title 1</CardLabel></CardItem>
              <CardItem><CardFace $size={32}>Title 2</CardFace><CardLabel>Title 2</CardLabel></CardItem>
              <CardItem><CardFace $size={26}>Title 3</CardFace><CardLabel>Title 3</CardLabel></CardItem>
              <CardItem><CardFace $size={18} $body>Body text</CardFace><CardLabel>Body Text</CardLabel></CardItem>
              <CardItem><CardFace /></CardItem>
              <CardItem><CardFace /></CardItem>
            </CardGrid>
            <ScrollTrack>
              <ScrollArrow />
              <ScrollThumb />
              <ScrollArrow $down />
            </ScrollTrack>
          </Library>

          <FloatGroup $x={18} $w={224}>
            <NavCell $w={43} $off><ChevronLeft size={17} strokeWidth={2.5} /></NavCell>
            <NavCell $w={42} $line><ChevronRight size={17} strokeWidth={2.5} /></NavCell>
            <NavCell $w={138}><Plus size={17} strokeWidth={2.5} />New design</NavCell>
          </FloatGroup>
          <FloatGroup $x={265} $w={118}>
            <NavCell $w={43}><Minus size={15} strokeWidth={3} /></NavCell>
            <NavCell $w={32}>50%</NavCell>
            <NavCell $w={43}><Plus size={17} strokeWidth={2.5} /></NavCell>
          </FloatGroup>
          <FloatGroup $x={393} $w={50}>
            <NavCell $w={48}><FaQuestionCircle size={18} /></NavCell>
          </FloatGroup>
          <FloatGroup $x={1491} $w={86}>
            <NavCell $w={42}><FaReply size={18} /></NavCell>
            <NavCell $w={42} $off><FaShare size={18} /></NavCell>
          </FloatGroup>
        </Stage>

        <Inspector>
          <InspectorScroll>
            <ActionRow $mt={19}>
              <Btn $kind="primary">Close</Btn>
              <DownloadBtn>
                <svg width="14" height="13" viewBox="0 0 14 13"><path d="M4.5 0 H9.5 V5 H14 L7 13 L0 5 H4.5Z" fill="#3c4858" /></svg>
                Download
              </DownloadBtn>
            </ActionRow>
            <SavedRow><GreenDot />All changes saved</SavedRow>
            <SectionHead>
              Arrange
              <HeadIcons><FaTrashAlt size={13} /><FaLock size={13} /></HeadIcons>
            </SectionHead>
            <ActionRow $mt={19}>
              <Btn>Forward</Btn>
              <Btn>Backward</Btn>
            </ActionRow>
            <ActionRow $mt={13}>
              <Btn $kind="muted">Group</Btn>
              <Btn $kind="muted">Ungroup</Btn>
            </ActionRow>
            <AlignRow>
              <AlignIcon d="M1 0 V18 M4 5 H15 M4 11 H11" />
              <AlignIcon d="M3 5 H17 M6 11 H14" />
              <AlignIcon d="M19 0 V18 M5 5 H16 M9 11 H16" />
              <AlignIcon d="M1 1 H19 M7 4 V16 M13 4 V12" />
              <AlignIcon d="M7 3 V15 M13 6 V12" />
              <AlignIcon d="M1 17 H19 M7 3 V14 M13 7 V14" />
              <AlignIcon d="M10 4 V18" />
              <AlignIcon d="M2 1 V17 M18 1 V17 M10 4 V14" />
              <AlignIcon d="M1 1 H19 M1 17 H19 M4 9 H16" />
            </AlignRow>
            <PropRows>
              <PropRow>
                <PropLabel>Position</PropLabel>
                <Field>1036<FieldUnit>X</FieldUnit></Field>
                <Field>610<FieldUnit>Y</FieldUnit></Field>
              </PropRow>
              <PropRow>
                <PropLabel>Size<FaUnlock size={14} color="#dfe4ec" /></PropLabel>
                <Field>404<FieldUnit>W</FieldUnit></Field>
                <Field>180<FieldUnit>H</FieldUnit></Field>
              </PropRow>
              <PropRow>
                <PropLabel>Rotation</PropLabel>
                <Field>0<FieldUnit>°</FieldUnit></Field>
              </PropRow>
              <PropRow>
                <PropLabel>Opacity</PropLabel>
                <Field>100<FieldUnit>%</FieldUnit></Field>
                <Slider><Thumb $end /></Slider>
              </PropRow>
              <PropRow>
                <PropLabel>Radius</PropLabel>
                <Field>0<FieldUnit>Size</FieldUnit></Field>
                <Slider><Thumb /></Slider>
              </PropRow>
            </PropRows>
            <SectionHead>Fill color</SectionHead>
            <FillRow>
              <Swatch />
              <Field>100<FieldUnit>%</FieldUnit></Field>
              <Slider><Thumb $end /></Slider>
            </FillRow>
            <SectionHead>
              Border
              <HeadIcons><FaCog size={15} /></HeadIcons>
            </SectionHead>
            <ClippedFields>
              <ClippedField $dark />
              <ClippedField />
              <ClippedField />
            </ClippedFields>
          </InspectorScroll>
          <InspectorFoot><LibraryBtn $kind="primary">Add to Library</LibraryBtn></InspectorFoot>
        </Inspector>
      </Workspace>

      <Taskbar>
        <Weather>
          <svg width="32" height="32" viewBox="0 0 32 32">
            <ellipse cx="16" cy="10" rx="9" ry="9" fill="#d9dff0" />
            <ellipse cx="8" cy="16" rx="7" ry="7" fill="#f4f6fb" />
            <ellipse cx="23" cy="16" rx="7" ry="7" fill="#bfcbe4" />
            <path d="M20 16 C22 22 24 24 24 27 A4 4 0 0 1 16 27 C16 24 18 22 20 16Z" fill="#1c9ce8" />
          </svg>
          <div>9°C<br />Lluvia suave</div>
        </Weather>
        <DockRow>
          {DockIcons.map(i => (
            <DockCell key={i.key} $active={i.active}>
              {i.node}
              {(i.dot || i.active) && <DockMark $active={i.active} />}
            </DockCell>
          ))}
        </DockRow>
        <Tray>
          <TrayGlyph $mr={12} width="16" height="10" viewBox="0 0 16 10" fill="none" stroke="#222" strokeWidth="1.3"><path d="M1 9 L8 1 L15 9" /></TrayGlyph>
          <TrayGlyph $mr={18} width="22" height="18" viewBox="0 0 22 18"><path d="M5 17 C0 17 0 10 5 9 C6 3 12 1 15 5 C20 5 22 12 18 17Z" fill="#aaa" stroke="#333" /></TrayGlyph>
          <TrayText $w={28}>ESP<br />LAA</TrayText>
          <TrayIcons>
            <svg width="20" height="22" viewBox="0 0 20 22" fill="none" stroke="#222" strokeWidth="1.2"><rect x="1" y="5" width="15" height="12" /><path d="M5 20 H12 M8 17 V20" /><rect x="14" y="1" width="4" height="9" fill="#eee" /></svg>
            <svg width="22" height="18" viewBox="0 0 22 18" fill="none" stroke="#222" strokeWidth="1.2"><path d="M1 6 H5 L10 2 V16 L5 12 H1Z M13 6 Q15 9 13 12 M16 4 Q19 9 16 14" /></svg>
            <svg width="20" height="20" viewBox="0 0 20 20"><rect x="2" y="6" width="13" height="11" fill="#222" /><rect x="4" y="1" width="3" height="5" fill="#222" /><rect x="16" y="9" width="3" height="5" fill="#222" /></svg>
          </TrayIcons>
          <TrayText $w={80} $right>18:36<br />22/06/2022</TrayText>
        </Tray>
      </Taskbar>
    </Page>
  )
}
